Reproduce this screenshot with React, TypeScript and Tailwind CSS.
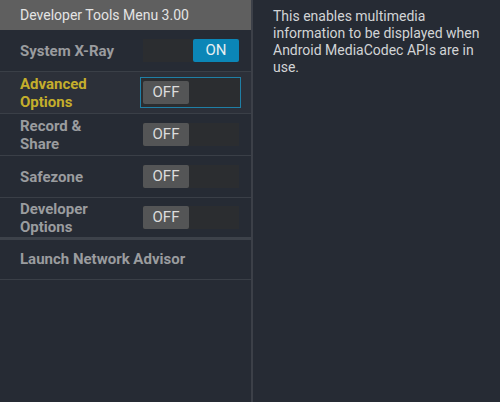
import React from "react";

type Row = { label: string[]; on?: boolean; focused?: boolean; highlight?: boolean };

const rows: Row[] = [
  { label: ["System X-Ray"], on: true },
  { label: ["Advanced", "Options"], focused: true, highlight: true },
  { label: ["Record &", "Share"] },
  { label: ["Safezone"] },
  { label: ["Developer", "Options"] },
];

function Toggle({ on, focused }: { on?: boolean; focused?: boolean }) {
  const track = (
    <div className="flex h-[23px] w-[96px] bg-[#2b2d30]">
      {on ? (
        <>
          <div className="flex-1" />
          <div className="flex w-[46px] items-center justify-center rounded-[2px] bg-[#0b86b7] text-[15px] text-[#e6eef2]">ON</div>
        </>
      ) : (
        <>
          <div className="flex w-[46px] items-center justify-center rounded-[2px] bg-[#545556] text-[15px] text-[#dcdcdc]">OFF</div>
          <div className="flex-1" />
        </>
      )}
    </div>
  );
  if (focused) {
    return (
      <div className="border border-[#1f7fa6] bg-[#2b2d30] pb-[3px] pl-[2px] pr-[1px] pt-[3px]">{track}</div>
    );
  }
  return track;
}

export default function App() {
  return (
    <div
      className="flex h-[402px] w-[500px] bg-[#262b34]"
      style={{ fontFamily: "Roboto, 'Liberation Sans', sans-serif" }}
    >
      <div className="flex w-[251px] flex-col">
        <div className="flex h-[30px] items-center bg-[#5f5f5f] pl-[20px] text-[14px] text-[#e4e4e4]">
          Developer Tools Menu 3.00
        </div>
        {rows.map((r, i) => (
          <div
            key={i}
            className={`flex h-[42px] items-center justify-between border-b border-[#3a3f47] pl-[20px] pr-[12px] ${
              r.highlight ? "bg-[#2c3039]" : ""
            } ${i === rows.length - 1 ? "border-b-[3px] border-b-[#3d424a]" : ""}`}
          >
            <div
              className={`text-[15px] font-bold leading-[18px] ${
                r.highlight ? "text-[#c4ae2c]" : "text-[#9a9c9f]"
              }`}
            >
              {r.label.map((l, j) => (
                <div key={j}>{l}</div>
              ))}
            </div>
            <div className={r.focused ? "mr-[-2px]" : ""}>
              <Toggle on={r.on} focused={r.focused} />
            </div>
          </div>
        ))}
        <div className="flex h-[40px] items-center border-b border-[#3a3f47] pl-[20px] text-[15px] font-bold text-[#9a9c9f]">
          Launch Network Advisor
        </div>
      </div>
      <div className="w-[2px] bg-[#3c4048]" />
      <div className="flex-1 pl-[20px] pr-[12px] pt-[8px] text-[14px] leading-[17px] text-[#d2d4d6]">
        This enables multimedia information to be displayed when Android MediaCodec APIs are in use.
      </div>
    </div>
  );
}
